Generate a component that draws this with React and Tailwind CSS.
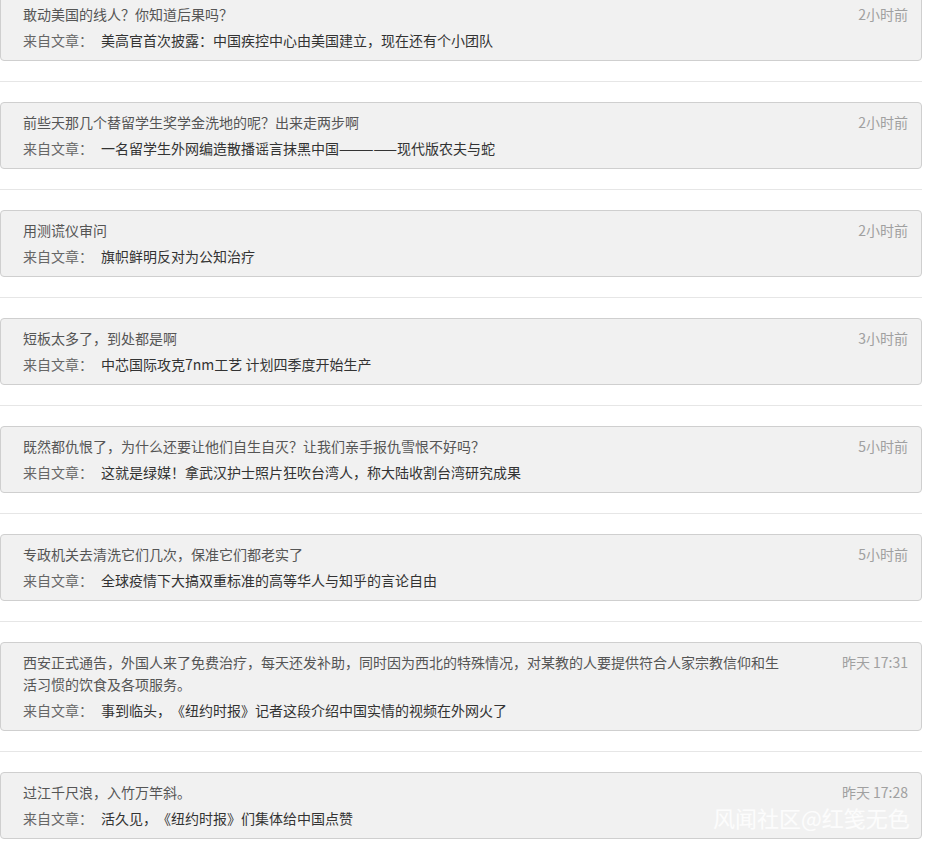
import React from "react";

const comments = [
  {
    text: "敢动美国的线人？你知道后果吗？",
    article: "美高官首次披露：中国疾控中心由美国建立，现在还有个小团队",
    time: "2小时前",
  },
  {
    text: "前些天那几个替留学生奖学金洗地的呢？出来走两步啊",
    article: "一名留学生外网编造散播谣言抹黑中国—————现代版农夫与蛇",
    time: "2小时前",
  },
  {
    text: "用测谎仪审问",
    article: "旗帜鲜明反对为公知治疗",
    time: "2小时前",
  },
  {
    text: "短板太多了，到处都是啊",
    article: "中芯国际攻克7nm工艺 计划四季度开始生产",
    time: "3小时前",
  },
  {
    text: "既然都仇恨了，为什么还要让他们自生自灭？让我们亲手报仇雪恨不好吗？",
    article: "这就是绿媒！拿武汉护士照片狂吹台湾人，称大陆收割台湾研究成果",
    time: "5小时前",
  },
  {
    text: "专政机关去清洗它们几次，保准它们都老实了",
    article: "全球疫情下大搞双重标准的高等华人与知乎的言论自由",
    time: "5小时前",
  },
  {
    text: "西安正式通告，外国人来了免费治疗，每天还发补助，同时因为西北的特殊情况，对某教的人要提供符合人家宗教信仰和生活习惯的饮食及各项服务。",
    article: "事到临头，《纽约时报》记者这段介绍中国实情的视频在外网火了",
    time: "昨天 17:31",
  },
  {
    text: "过江千尺浪，入竹万竿斜。",
    article: "活久见，《纽约时报》们集体给中国点赞",
    time: "昨天 17:28",
  },
];

function CommentCard({ item }) {
  return (
    <div className="rounded-[4px] border border-[#cfcfcf] bg-[#f1f1f1] pl-[22px] pr-[13px] pt-[8px] pb-[10px]">
      <div className="flex justify-between">
        <div className="w-[762px] text-[14px] leading-[22px] text-[#555]">{item.text}</div>
        <div className="whitespace-nowrap text-[14px] leading-[22px] text-[#a0a0a0]">{item.time}</div>
      </div>
      <div className="mt-[5px] text-[14px] leading-[20px]">
        <span className="mr-2 text-[#666]">来自文章：</span>
        <span className="text-[#333]">{item.article}</span>
      </div>
    </div>
  );
}

export default function App() {
  return (
    <div
      className="relative h-[844px] overflow-hidden bg-white [text-spacing-trim:space-all]"
      style={{ fontFamily: '"Noto Sans CJK SC", "Noto Sans", sans-serif' }}
    >
      <div className="mt-[-6px] w-[922px]">
        {comments.map((item, i) => (
          <div key={i}>
            <CommentCard item={item} />
            {i < comments.length - 1 && <div className="my-5 h-px bg-[#e6e6e6]" />}
          </div>
        ))}
      </div>

      {/* watermark */}
      <div className="absolute left-[713px] top-[806px] whitespace-nowrap text-[22px] leading-[22px] text-white/80">
        风闻社区@红笺无色
      </div>
    </div>
  );
}
